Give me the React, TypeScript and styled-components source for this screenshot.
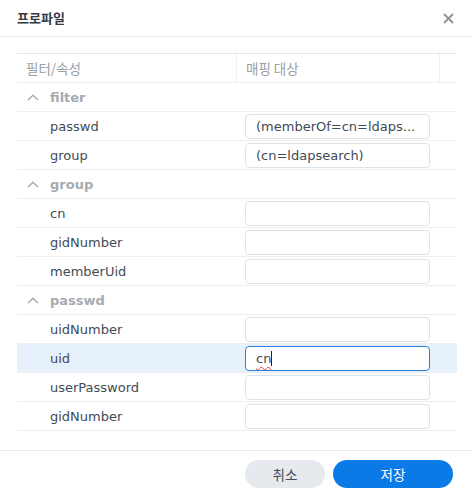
import React from "react";
import styled, { createGlobalStyle } from "styled-components";

const Global = createGlobalStyle`
  html, body {
    margin: 0;
    background: #fff;
  }
  body {
    font-family: "DejaVu Sans", "Noto Sans CJK KR", sans-serif;
    font-size: 13px;
    color: #414b55;
  }
`;

const Dialog = styled.div`
  width: 472px;
  height: 495px;
  display: flex;
  flex-direction: column;
  background: #fff;
`;

const Header = styled.div`
  height: 37px;
  border-bottom: 1px solid #e9ebed;
  display: flex;
  align-items: center;
  justify-content: space-between;
  padding: 0 17px;
  box-sizing: border-box;
`;

const Title = styled.div`
  font-family: "Noto Sans CJK KR", sans-serif;
  font-weight: 700;
  font-size: 13px;
  color: #333a40;
  margin-top: -2px;
`;

const Close = styled.button`
  border: 0;
  background: none;
  padding: 0;
  width: 12px;
  height: 12px;
  margin-right: 1px;
  display: flex;
  align-items: center;
  justify-content: center;
  cursor: pointer;
`;

const Body = styled.div`
  flex: 1;
  padding: 16px 15px 0 17px;
`;

const Table = styled.div`
  width: 440px;
  border-top: 1px solid #e6e8ea;
`;

const Row = styled.div<{ $active?: boolean }>`
  display: grid;
  grid-template-columns: 220px 203px 17px;
  height: 29px;
  box-sizing: border-box;
  border-bottom: 1px solid #eceef0;
  background: ${(p) => (p.$active ? "#e6f1fc" : "transparent")};
`;

const HeadCell = styled.div<{ $last?: boolean }>`
  display: flex;
  align-items: center;
  padding-left: 9px;
  font-family: "Noto Sans CJK KR", sans-serif;
  font-size: 13.5px;
  color: #9aa0a6;
  border-right: ${(p) => (p.$last ? "none" : "1px solid #eceef0")};
`;

const GroupRow = styled.div`
  display: flex;
  align-items: center;
  height: 29px;
  box-sizing: border-box;
  border-bottom: 1px solid #eceef0;
  padding-left: 10px;
  gap: 11px;
  font-weight: 700;
  color: #a5abb1;
`;

const Name = styled.div`
  display: flex;
  align-items: center;
  padding-left: 33px;
`;

const InputCell = styled.div`
  display: flex;
  align-items: center;
  padding: 0 10px 0 8px;
`;

const Field = styled.input`
  width: 100%;
  height: 25px;
  box-sizing: border-box;
  border: 1px solid #dfe3e7;
  border-radius: 4px;
  padding: 0 10px;
  font-family: "DejaVu Sans", sans-serif;
  font-size: 13px;
  color: #414b55;
  background: #fff;
  outline: none;
`;

const FocusedField = styled.div`
  width: 100%;
  height: 25px;
  box-sizing: border-box;
  border: 1px solid #2a7fd9;
  border-radius: 4px;
  padding: 0 10px;
  display: flex;
  align-items: center;
  background: #fff;
`;

const Typed = styled.span`
  text-decoration: underline wavy #e0403a;
  text-decoration-thickness: 1px;
  text-underline-offset: 3px;
`;

const Caret = styled.span`
  display: inline-block;
  width: 1px;
  height: 15px;
  background: #222;
`;

const Footer = styled.div`
  height: 45px;
  box-sizing: border-box;
  border-top: 1px solid #e9ebed;
  display: flex;
  justify-content: flex-end;
  align-items: flex-start;
  padding: 9px 19px 0 0;
  gap: 8px;
`;

const Button = styled.button<{ $primary?: boolean }>`
  height: 28px;
  width: ${(p) => (p.$primary ? "120px" : "80px")};
  border: 0;
  border-radius: 14px;
  font-family: "Noto Sans CJK KR", sans-serif;
  font-size: 13.5px;
  background: ${(p) => (p.$primary ? "#0a7ae6" : "#e6eaee")};
  color: ${(p) => (p.$primary ? "#fff" : "#414b55")};
  cursor: pointer;
`;

const Chevron = () => (
  <svg width="12" height="7" viewBox="0 0 12 7">
    <path d="M1 6 L6 1.2 L11 6" fill="none" stroke="#a5abb1" strokeWidth="1.4" />
  </svg>
);

type Item = { name: string; value?: string; active?: boolean };
type Group = { title: string; items: Item[] };

const groups: Group[] = [
  {
    title: "filter",
    items: [
      { name: "passwd", value: "(memberOf=cn=ldaps..." },
      { name: "group", value: "(cn=ldapsearch)" },
    ],
  },
  {
    title: "group",
    items: [{ name: "cn" }, { name: "gidNumber" }, { name: "memberUid" }],
  },
  {
    title: "passwd",
    items: [
      { name: "uidNumber" },
      { name: "uid", active: true },
      { name: "userPassword" },
      { name: "gidNumber" },
    ],
  },
];

export default function App() {
  return (
    <>
      <Global />
      <Dialog>
        <Header>
          <Title>프로파일</Title>
          <Close aria-label="close">
            <svg width="11" height="11" viewBox="0 0 11 11">
              <path d="M1 1 L10 10 M10 1 L1 10" stroke="#8e959c" strokeWidth="2" />
            </svg>
          </Close>
        </Header>
        <Body>
          <Table>
            <Row>
              <HeadCell>필터/속성</HeadCell>
              <HeadCell>매핑 대상</HeadCell>
              <HeadCell $last />
            </Row>
            {groups.map((g) => (
              <React.Fragment key={g.title}>
                <GroupRow>
                  <Chevron />
                  {g.title}
                </GroupRow>
                {g.items.map((it) => (
                  <Row key={g.title + it.name} $active={it.active}>
                    <Name>{it.name}</Name>
                    <InputCell>
                      {it.active ? (
                        <FocusedField>
                          <Typed>cn</Typed>
                          <Caret />
                        </FocusedField>
                      ) : (
                        <Field readOnly value={it.value ?? ""} />
                      )}
                    </InputCell>
                    <div />
                  </Row>
                ))}
              </React.Fragment>
            ))}
          </Table>
        </Body>
        <Footer>
          <Button>취소</Button>
          <Button $primary>저장</Button>
        </Footer>
      </Dialog>
    </>
  );
}
